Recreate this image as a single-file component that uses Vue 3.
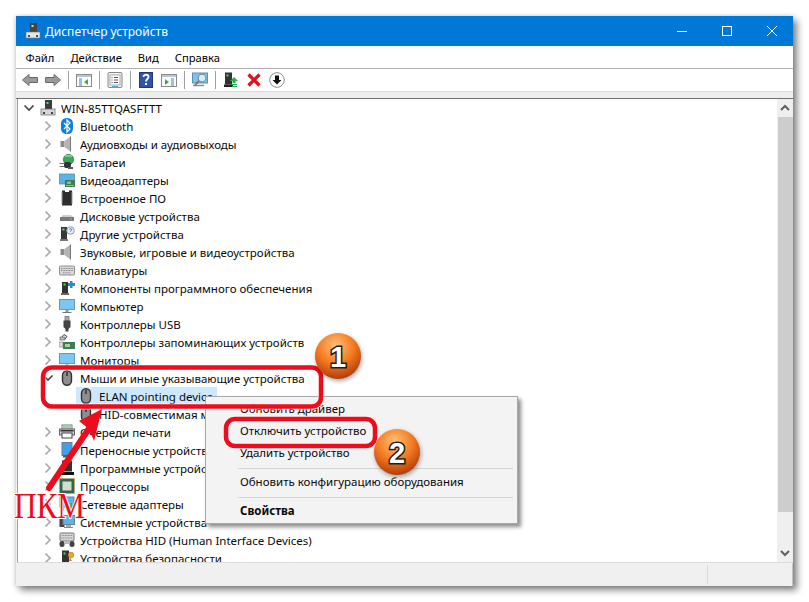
<template>
  <div class="page">
    <div class="window">
      <header class="titlebar">
        <svg class="ico title-ico" viewBox="0 0 16 16"><g v-html="icons.titlePc" /></svg>
        <span class="title">Диспетчер устройств</span>
        <div class="caption">
          <svg width="12" height="12" viewBox="0 0 12 12"><path d="M1 6.5h10" stroke="#fff" fill="none" /></svg>
          <svg width="12" height="12" viewBox="0 0 12 12"><rect x="1.5" y="1.5" width="9" height="9" stroke="#fff" fill="none" /></svg>
          <svg width="12" height="12" viewBox="0 0 12 12"><path d="M1 1l10 10M11 1L1 11" stroke="#fff" fill="none" /></svg>
        </div>
      </header>

      <nav class="menubar">
        <span v-for="m in menu" :key="m">{{ m }}</span>
      </nav>

      <div class="toolbar">
        <template v-for="(t, i) in toolbar" :key="i">
          <i v-if="t === 'sep'" class="sep"></i>
          <span v-else class="tool">
            <svg class="ico" viewBox="0 0 16 16"><g v-html="icons[t]" /></svg>
          </span>
        </template>
      </div>
      <div class="band"></div>

      <div class="content">
        <div class="tree">
          <div
            v-for="row in rows"
            :key="row.text"
            class="row"
            :class="['lvl' + row.level, { selected: row.selected }]"
          >
            <span class="chev">
              <svg v-if="row.open" width="12" height="12" viewBox="0 0 12 12"><path d="M1.5 3.5L6 8l4.500-4.500" stroke="#444" stroke-width="1.6" fill="none" /></svg>
              <svg v-else-if="row.level < 2" width="12" height="12" viewBox="0 0 12 12"><path d="M3.500 1.500L8 6l-4.500 4.500" stroke="#a6a6a6" stroke-width="1.6" fill="none" /></svg>
            </span>
            <svg class="ico" viewBox="0 0 16 16"><g v-html="icons[row.icon]" /></svg>
            <span class="label">{{ row.text }}</span>
          </div>
        </div>
        <div class="scrollbar">
          <svg width="16" height="18" viewBox="0 0 16 18"><path d="M4 11l4-4 4 4" stroke="#606060" stroke-width="2" fill="none" /></svg>
          <div class="thumb"></div>
          <svg width="16" height="18" viewBox="0 0 16 18"><path d="M4 7l4 4 4-4" stroke="#606060" stroke-width="2" fill="none" /></svg>
        </div>
      </div>

      <footer class="statusbar">
        <div class="status-main"></div>
        <div class="status-side"></div>
      </footer>
    </div>

    <div class="context">
      <div class="item">Обновить драйвер</div>
      <div class="item">Отключить устройство</div>
      <div class="item">Удалить устройство</div>
      <div class="divider"></div>
      <div class="item">Обновить конфигурацию оборудования</div>
      <div class="divider"></div>
      <div class="item strong">Свойства</div>
    </div>

    <svg class="marks" width="809" height="602" viewBox="0 0 809 602">
      <defs>
        <radialGradient id="ball" cx="45%" cy="28%" r="78%">
          <stop offset="0" stop-color="#ffc27a" />
          <stop offset="0.5" stop-color="#f47a20" />
          <stop offset="1" stop-color="#a83206" />
        </radialGradient>
      </defs>
      <rect x="43" y="367.5" width="278" height="39" rx="9" fill="none" stroke="#fff" stroke-opacity=".5" stroke-width="6.5" />
      <rect x="43" y="367.5" width="278" height="39" rx="9" fill="none" stroke="#ee0c1c" stroke-width="4.5" />
      <rect x="226" y="419" width="149" height="27" rx="9" fill="none" stroke="#fff" stroke-opacity=".5" stroke-width="6.5" />
      <rect x="226" y="419" width="149" height="27" rx="9" fill="none" stroke="#ee0c1c" stroke-width="4.5" />

      <path d="M49 488L92 424" stroke="#ee0c1c" stroke-width="6" stroke-linecap="round" fill="none" />
      <path d="M102 409L79 421L89 429L94 441z" fill="#ee0c1c" />

      <g>
        <circle class="ball" cx="338" cy="356" r="23" fill="url(#ball)" />
        <text class="num" x="338" y="366.500">1</text>
        <circle class="ball" cx="397" cy="452" r="23" fill="url(#ball)" />
        <text class="num" x="397" y="462.500">2</text>
      </g>
      <text class="pkm" x="14" y="518" textLength="71" lengthAdjust="spacingAndGlyphs">ПКМ</text>
    </svg>
  </div>
</template>

<script setup>
const menu = ['Файл', 'Действие', 'Вид', 'Справка']

const toolbar = [
  'back', 'forward', 'sep', 'panelLeft', 'sep', 'sheet', 'sep', 'help', 'panelRight',
  'sep', 'scan', 'sep', 'addPc', 'cross', 'downCircle'
]

const rows = [
  { text: 'WIN-85TTQASFTTT', icon: 'pc', level: 0, open: true },
  { text: 'Bluetooth', icon: 'bluetooth', level: 1 },
  { text: 'Аудиовходы и аудиовыходы', icon: 'speaker', level: 1 },
  { text: 'Батареи', icon: 'battery', level: 1 },
  { text: 'Видеоадаптеры', icon: 'video', level: 1 },
  { text: 'Встроенное ПО', icon: 'chip', level: 1 },
  { text: 'Дисковые устройства', icon: 'disk', level: 1 },
  { text: 'Другие устройства', icon: 'other', level: 1 },
  { text: 'Звуковые, игровые и видеоустройства', icon: 'speaker', level: 1 },
  { text: 'Клавиатуры', icon: 'keyboard', level: 1 },
  { text: 'Компоненты программного обеспечения', icon: 'component', level: 1 },
  { text: 'Компьютер', icon: 'monitor', level: 1 },
  { text: 'Контроллеры USB', icon: 'usb', level: 1 },
  { text: 'Контроллеры запоминающих устройств', icon: 'storage', level: 1 },
  { text: 'Мониторы', icon: 'monitor', level: 1 },
  { text: 'Мыши и иные указывающие устройства', icon: 'mouse', level: 1, open: true },
  { text: 'ELAN pointing device', icon: 'mouse', level: 2, selected: true },
  { text: 'HID-совместимая мышь', icon: 'mouse', level: 2 },
  { text: 'Очереди печати', icon: 'printer', level: 1 },
  { text: 'Переносные устройства', icon: 'portable', level: 1 },
  { text: 'Программные устройства', icon: 'software', level: 1 },
  { text: 'Процессоры', icon: 'cpu', level: 1 },
  { text: 'Сетевые адаптеры', icon: 'network', level: 1 },
  { text: 'Системные устройства', icon: 'system', level: 1 },
  { text: 'Устройства HID (Human Interface Devices)', icon: 'hid', level: 1 },
  { text: 'Устройства безопасности', icon: 'security', level: 1 }
]

// 16x16 glyphs, drawn by hand after the Windows device manager icons
const icons = {
  titlePc: '<rect x="5" y="0" width="7" height="10" fill="#444"/><rect x="6.5" y="2" width="2" height="2" fill="#9f9"/><rect x="1" y="9" width="14" height="6" fill="#e6e6e6" stroke="#777" stroke-width=".6"/><rect x="3" y="12" width="2" height="2" fill="#555"/><rect x="11" y="12" width="2" height="2" fill="#555"/>',
  pc: '<rect x="5" y="0" width="7" height="9" fill="#3c3c3c"/><rect x="6.5" y="2" width="2" height="2" fill="#4fe04f"/><rect x="1" y="9" width="14" height="6" fill="#d6d6d6" stroke="#666" stroke-width=".7"/><rect x="3" y="12" width="2" height="2" fill="#444"/><rect x="11" y="12" width="2" height="2" fill="#444"/>',
  bluetooth: '<rect x="2" y="0" width="12" height="16" rx="5.5" fill="#0a7de6"/><path d="M5 5l6 6-3 3V2l3 3-6 6" stroke="#fff" stroke-width="1.2" fill="none"/>',
  speaker: '<rect x="1.500" y="5" width="4" height="6" fill="#8c8c8c"/><path d="M5.500 5l6-4.500v15l-6-4.500z" fill="#b4b4b4"/><path d="M11.500 .5v15" stroke="#777"/>',
  battery: '<circle cx="9.5" cy="5.5" r="5.200" fill="#3fa65a" stroke="#1f6e38" stroke-width=".6"/><path d="M6 2h7" stroke="#c9e8cf"/><rect x="5" y="8" width="7" height="6" rx="2" fill="#333"/><path d="M.5 9.500h4.500M.5 12.500h4.500" stroke="#777" stroke-width="1.2"/><rect x="9" y="13" width="5" height="2" fill="#555"/>',
  video: '<rect x="0.5" y="2" width="15" height="10" fill="#5cb3ea" stroke="#5c8aa8" stroke-width=".8"/><rect x="6" y="8" width="10" height="7" fill="#3d7d52"/><path d="M7 13.5h8" stroke="#c8b04a"/><rect x="8" y="9.5" width="4" height="2.5" fill="#86c08e"/>',
  chip: '<rect x="3" y="0.5" width="10" height="15" fill="#2d2d2d"/><rect x="6" y="0" width="4" height="2" fill="#fff"/><path d="M2 3h2M2 5h2M2 7h2M2 9h2M2 11h2M2 13h2M12 3h2M12 5h2M12 7h2M12 9h2M12 11h2M12 13h2" stroke="#999"/>',
  disk: '<path d="M2 9l2-2h8l2 2z" fill="#cfcfcf"/><rect x="1" y="9" width="14" height="4" fill="#7a7a7a"/><rect x="11" y="10.5" width="2" height="1" fill="#6fe06f"/>',
  other: '<rect x="2" y="1" width="6" height="12" fill="#383838"/><rect x="3.5" y="2.5" width="2" height="2" fill="#5fe05f"/><rect x="1" y="13" width="8" height="2" fill="#777"/><circle cx="11.5" cy="4.5" r="3.8" fill="#e6eef8" stroke="#7d9cc4"/><path d="M10.3 3.6c.3-1.3 2.6-1.2 2.5.2-.1.9-1.3.9-1.3 1.8" stroke="#3c68a8" fill="none" stroke-width=".9"/>',
  keyboard: '<rect x="0.5" y="4" width="15" height="9" rx="1" fill="#d8d8d8" stroke="#8f8f8f"/><path d="M2 6.5h12M2 8.5h12M4 10.8h8" stroke="#8a8a8a" stroke-dasharray="1 .6"/>',
  component: '<rect x="3" y="2" width="6" height="11" fill="#333"/><rect x="4.5" y="3.5" width="2" height="2" fill="#4fe04f"/><rect x="2" y="13" width="8" height="2" fill="#666"/><path d="M9 3h2V1h2.5v2H16v3h-2.5v2H11V6H9z" fill="#2f86d6"/>',
  monitor: '<rect x="0.5" y="1.5" width="15" height="10" fill="#7cc6f2" stroke="#5d9cc6"/><rect x="6.5" y="12" width="3" height="2" fill="#9a9a9a"/><rect x="3.5" y="14" width="9" height="1" fill="#777"/>',
  usb: '<rect x="6" y="0.5" width="4" height="4" fill="#aaa" stroke="#666" stroke-width=".7"/><path d="M4.5 4.5h7v6.5L9.5 13v2.5h-3V13L4.5 11z" fill="#444"/>',
  storage: '<path d="M5 0.5l3 2-2 2.5-3-2z" fill="#fff" stroke="#444"/><rect x="1" y="3" width="5" height="3" fill="#bbb" stroke="#555" stroke-width=".6"/><rect x="4" y="8" width="12" height="7" fill="#3d7d52"/><rect x="6" y="10" width="5" height="3" fill="#a8d2ad"/><rect x="0" y="8" width="4" height="5" fill="#ddd" stroke="#777" stroke-width=".6"/>',
  mouse: '<rect x="3.5" y="0.8" width="9" height="14.4" rx="4.5" fill="#8e8e8e" stroke="#333" stroke-width="1.4"/><path d="M8 2v4" stroke="#222" stroke-width="1.3"/>',
  printer: '<rect x="3" y="1" width="10" height="4" fill="#fff" stroke="#777"/><rect x="0.5" y="5" width="15" height="6" fill="#cfcfcf" stroke="#666"/><rect x="3" y="9" width="10" height="5" fill="#fff" stroke="#444"/><path d="M4 3h8" stroke="#39a85a"/><rect x="1.5" y="6" width="13" height="1.5" fill="#333"/>',
  portable: '<rect x="3" y="0.5" width="10" height="13" fill="#3f9fe8" stroke="#6a7f90"/><rect x="4" y="13" width="9" height="2.5" fill="#5c5c5c"/>',
  software: '<rect x="3" y="0.5" width="10" height="11" fill="#333"/><path d="M4 0.5h8v2H4z" fill="#5c5c5c"/><rect x="1" y="12" width="14" height="3" fill="#111"/>',
  cpu: '<rect x="0.5" y="0.5" width="15" height="15" fill="#2f6a48" stroke="#c8a84a" stroke-dasharray="1 1"/><rect x="3.5" y="3.5" width="9" height="9" fill="#d6dbd6"/>',
  network: '<rect x="1" y="1" width="14" height="10" fill="#5cb3ea" stroke="#5c8aa8"/><path d="M4 15V6M8 15V4M12 15V7" stroke="#3fb05a" stroke-width="2"/>',
  system: '<rect x="0.5" y="3" width="5" height="10" fill="#444"/><rect x="4" y="1.5" width="11.5" height="9" fill="#5cb3ea" stroke="#6a7f90"/><rect x="7" y="11" width="5" height="2" fill="#aaa"/><rect x="5" y="13" width="9" height="1" fill="#888"/>',
  hid: '<rect x="1" y="1" width="14" height="8" rx="1" fill="#d6d6d6" stroke="#777"/><path d="M2.5 3.5h11M2.5 6h11" stroke="#888" stroke-dasharray="1 .6"/><rect x="0.5" y="9" width="5" height="6" rx="2.5" fill="#444"/><rect x="10.5" y="9" width="5" height="6" rx="2.5" fill="#444"/><rect x="5.5" y="9" width="5" height="3" fill="#bbb"/>',
  security: '<rect x="3" y="0.5" width="7" height="12" fill="#333"/><rect x="4.5" y="2.5" width="2" height="2" fill="#4fe04f"/><rect x="2" y="13" width="9" height="2" fill="#555"/><circle cx="12" cy="5" r="2.8" fill="#e3a93a" stroke="#a67418" stroke-width=".6"/><path d="M11 7l-1 4h3z" fill="#c48a24"/>',
  back: '<path d="M0.5 8L7 2.5V5.5H15.5V10.5H7V13.5z" fill="#9a9a9a" stroke="#6a6a6a"/>',
  forward: '<path d="M15.5 8L9 2.5V5.5H0.5V10.5H9V13.5z" fill="#9a9a9a" stroke="#6a6a6a"/>',
  panelLeft: '<rect x="0.5" y="2.5" width="15" height="12" fill="#fff" stroke="#8a8a8a"/><rect x="1" y="3" width="14" height="2" fill="#b9c5d0"/><path d="M3 7h3M3 9h3M3 11h3M3 13h3" stroke="#3c7fc4"/><path d="M12 7v6l-4-3z" fill="#3ea854"/>',
  sheet: '<rect x="1" y="0.5" width="14" height="15" rx="1" fill="#eee" stroke="#8a8a8a"/><rect x="3" y="3" width="10" height="10" fill="#fff" stroke="#aaa"/><path d="M7 5.5h4M7 8h4M7 10.5h4M4.5 5.5h1M4.5 8h1M4.5 10.5h1" stroke="#555"/><rect x="5" y="14" width="6" height="1.5" fill="#4aa8e8"/>',
  help: '<rect x="1.5" y="0.5" width="13" height="15" fill="#2f55a8" stroke="#1d3a80"/><path d="M5.5 5c0-3 5-3 5 0 0 2-2.500 2-2.500 4.500" stroke="#fff" stroke-width="1.8" fill="none"/><rect x="7" y="11" width="2" height="2" fill="#fff"/>',
  panelRight: '<rect x="0.5" y="2.5" width="15" height="12" fill="#fff" stroke="#8a8a8a"/><rect x="1" y="3" width="14" height="2" fill="#b9c5d0"/><path d="M10 7h3M10 9h3M10 11h3M10 13h3" stroke="#3c7fc4"/><path d="M4 7v6l4-3z" fill="#3ea854"/>',
  scan: '<rect x="0.5" y="1" width="15" height="10" fill="#78c4f0" stroke="#5d8faf"/><path d="M1 13.500h11" stroke="#888" stroke-width="1.400"/><circle cx="10" cy="6" r="3.800" fill="#d8ecf6" stroke="#8c8c8c" stroke-width="1.200"/><path d="M7 9l-4 4" stroke="#777" stroke-width="1.800"/>',
  addPc: '<rect x="2" y="0.500" width="7" height="12" fill="#333"/><rect x="3.500" y="2.500" width="2" height="2" fill="#4fe04f"/><rect x="1" y="12.500" width="9" height="2.500" fill="#222"/><path d="M11 5l4 4h-2.500v2h-3V9H7z" fill="#22b14c"/><path d="M9 12.500h5M9 14.500h5" stroke="#22b14c"/>',
  cross: '<path d="M2.500 2.500l11 11M13.500 2.500l-11 11" stroke="#e0101c" stroke-width="3.200"/>',
  downCircle: '<circle cx="8" cy="8" r="7.300" fill="#fff" stroke="#8a8a8a"/><path d="M6 3.500h4V8h2.500L8 12.500 3.500 8H6z" fill="#111"/>'
}
</script>

<style scoped>
.page {
  position: relative;
  width: 809px;
  height: 602px;
  background: #fff;
  overflow: hidden;
  font-family: "Noto Sans", "Open Sans", sans-serif;
  font-size: 11.5px;
  color: #0a0a0a;
}

.window {
  display: flex;
  flex-direction: column;
  width: 777px;
  height: 570px;
  margin: 16px 0 0 16px;
  background: #f0f0f0;
  box-shadow: 4px 4px 7px rgba(0, 0, 0, 0.5), -1px 0 4px rgba(0, 0, 0, 0.15);
}

.ico {
  flex: none;
  width: 16px;
  height: 16px;
}

.titlebar {
  display: flex;
  align-items: center;
  flex: none;
  height: 30px;
  padding-left: 9px;
  background: #0078d7;
  color: #fff;
}

.title {
  margin-left: 4px;
  font-size: 12px;
}

.caption {
  display: flex;
  gap: 33px;
  margin-left: auto;
  margin-right: 15px;
}

.menubar {
  display: flex;
  align-items: center;
  gap: 16px;
  flex: none;
  height: 22px;
  padding-left: 9.5px;
  font-size: 11.2px;
  background: #fff;
  border-bottom: 1px solid #b0b0b0;
  color: #000;
}

.toolbar {
  display: flex;
  align-items: center;
  flex: none;
  height: 22px;
  padding-left: 2px;
  background: #fff;
  border-bottom: 1px solid #dcdcdc;
}

.tool {
  display: flex;
  justify-content: center;
  width: 23px;
}

.sep {
  width: 1px;
  height: 18px;
  margin: 0 3.5px;
  background: #a0a0a0;
}

.band {
  flex: none;
  height: 6px;
  background: #eee;
  border-bottom: 1px solid #6f6f6f;
}

.content {
  display: flex;
  flex: none;
  height: 463px;
  margin-left: 1px;
  background: #fff;
  border-left: 1px solid #a0a0a0;
  border-bottom: 1px solid #dcdcdc;
}

.tree {
  flex: 1;
  overflow: hidden;
}

.row {
  display: flex;
  align-items: center;
  height: 18px;
  white-space: nowrap;
}

.lvl0 { padding-left: 5px; }
.lvl1 { padding-left: 24px; }
.lvl2 { padding-left: 43px; }

.selected {
  background: linear-gradient(#cce8ff, #cce8ff) no-repeat 58px 0 / 141px 18px;
}

.chev {
  display: flex;
  justify-content: center;
  flex: none;
  width: 12px;
  margin-right: 5px;
}

.label {
  margin-left: 5px;
}

.scrollbar {
  display: flex;
  flex-direction: column;
  align-items: center;
  flex: none;
  width: 16px;
  background: #efefef;
}

.scrollbar svg {
  flex: none;
}

.thumb {
  width: 15px;
  height: 395px;
  margin-bottom: 32px;
  background: #cdcdcd;
}

.statusbar {
  display: flex;
  flex: 1;
  background: #f0f0f0;
}

.status-main {
  width: 691px;
  margin: 2px 0;
  border-right: 1px solid #d9d9d9;
}

.status-side {
  flex: 1;
  border-right: 1px solid #c4c4c4;
}

.context {
  position: absolute;
  left: 205px;
  top: 396px;
  box-sizing: border-box;
  width: 313px;
  height: 128px;
  padding: 2px;
  background: #f3f3f3;
  border: 1px solid #a8a8a8;
  box-shadow: 3px 3px 4px rgba(0, 0, 0, 0.45);
}

.item {
  height: 22px;
  padding-left: 32px;
  line-height: 19px;
}

.strong {
  font-weight: 700;
}

.divider {
  height: 1px;
  margin: 3px 2px 3px 30px;
  background: #d4d4d4;
}

.marks {
  position: absolute;
  left: 0;
  top: 0;
}

.ball {
  filter: drop-shadow(1px 2px 2px rgba(0, 0, 0, 0.35));
}

.num {
  font-family: "Liberation Sans", sans-serif;
  font-size: 29px;
  font-weight: 700;
  text-anchor: middle;
  fill: #fff;
  stroke: #1c1c1c;
  stroke-width: 3px;
  paint-order: stroke;
}

.pkm {
  font-family: "Liberation Serif", serif;
  font-size: 35px;
  fill: #ee0c1c;
  stroke: #fff;
  stroke-width: 2px;
  paint-order: stroke;
}
</style>
